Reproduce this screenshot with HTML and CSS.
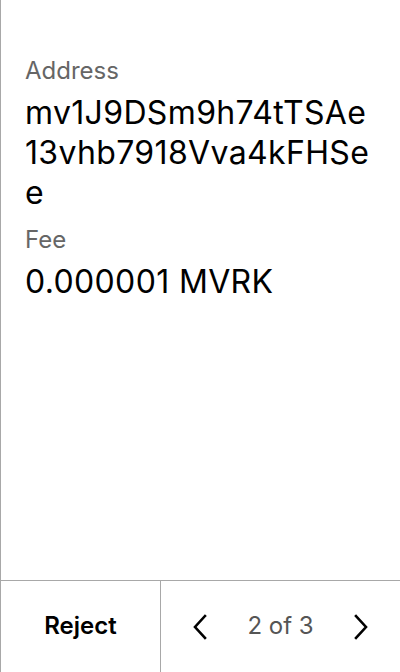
FILE: index.html
```html
<!DOCTYPE html>
<html>
<head>
<meta charset="utf-8">
<link rel="stylesheet" href="styles.css">
</head>
<body>
<div class="screen">
  <div class="content">
    <div class="field">
      <div class="label">Address</div>
      <div class="value address">mv1J9DSm9h74tTSAe13vhb7918Vva4kFHSee</div>
    </div>
    <div class="field">
      <div class="label">Fee</div>
      <div class="value">0.000001 MVRK</div>
    </div>
  </div>
  <div class="footer">
    <div class="reject">Reject</div>
    <div class="pager">
      <svg class="chev" width="16" height="26" viewBox="0 0 16 26"><path d="M13 2 L3 13 L13 24" fill="none" stroke="#000" stroke-width="2.6" stroke-linecap="square"/></svg>
      <span class="count">2 of 3</span>
      <svg class="chev" width="16" height="26" viewBox="0 0 16 26"><path d="M3 2 L13 13 L3 24" fill="none" stroke="#000" stroke-width="2.6" stroke-linecap="square"/></svg>
    </div>
  </div>
</div>
</body>
</html>
```
FILE: styles.css
```css
html, body {
  margin: 0;
  padding: 0;
  background: #fff;
}
body {
  font-family: Inter, "Noto Sans", sans-serif;
  color: #000;
}
.screen {
  width: 399px;
  height: 672px;
  border-left: 1px solid #a8a8a8;
  display: flex;
  flex-direction: column;
}
.content {
  flex: 1;
  padding: 56px 24px 0 24px;
  display: flex;
  flex-direction: column;
  gap: 12px;
}
.label {
  font-size: 24px;
  line-height: 30px;
  color: #666;
}
.value {
  font-size: 32px;
  line-height: 40px;
  margin-top: 7px;
  letter-spacing: 0.35px;
}
.address {
  word-break: break-all;
}
.footer {
  height: 91px;
  border-top: 1px solid #a8a8a8;
  display: flex;
}
.reject {
  width: 159px;
  border-right: 1px solid #a8a8a8;
  display: flex;
  align-items: center;
  justify-content: center;
  font-size: 24px;
  font-weight: 600;
  padding-bottom: 2px;
}
.pager {
  flex: 1;
  display: flex;
  align-items: center;
  justify-content: space-between;
  padding: 0 31px 0 31px;
}
.count {
  font-size: 24px;
  color: #555;
  padding-bottom: 2px;
}
.chev {
  display: block;
}
```
